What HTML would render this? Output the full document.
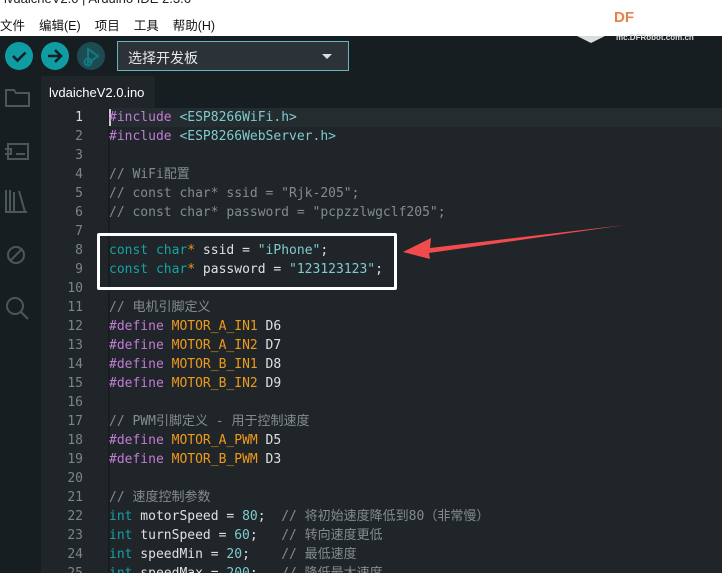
<!DOCTYPE html>
<html><head><meta charset="utf-8"><style>
*{margin:0;padding:0;box-sizing:border-box}
html,body{width:722px;height:573px;overflow:hidden}
body{background:#171e21;position:relative;font-family:"Liberation Sans","Noto Sans CJK SC",sans-serif}
.title{position:absolute;left:0;top:0;width:722px;height:36px;background:#fff}
.title .t{position:absolute;left:4px;top:-9px;font-size:13px;color:#222}
.menu{position:absolute;left:0;top:15px;font-size:12.5px;color:#111;white-space:nowrap}
.menu span{margin-right:14px}
.df{position:absolute;left:614px;top:9px;font-size:15px;font-weight:bold;color:#e8804a}
.mc{position:absolute;left:616px;top:33px;font-size:8px;font-weight:bold;color:#ddd}
.tri{position:absolute;left:577px;top:36px;width:0;height:0;border-left:14px solid transparent;border-right:14px solid transparent;border-top:7px solid #ddd}
.btn{position:absolute;top:42px;width:28px;height:28px;border-radius:50%;background:#0f9ca3}
.sel{position:absolute;left:117px;top:41px;width:232px;height:30px;border:1px solid #63b7bd;background:#2b3338;color:#e8e8e8;font-size:14px;padding:6px 0 0 10px}
.sel:after{content:"";position:absolute;right:16px;top:12px;border-left:5px solid transparent;border-right:5px solid transparent;border-top:5px solid #ddd}
.tab{position:absolute;left:41px;top:76px;width:114px;height:32px;background:#1f2528;color:#fff;font-size:13px;padding:9px 0 0 8px}
.ed{position:absolute;left:41px;top:108px;width:681px;height:465px;background:#1f2528}
.gut{position:absolute;left:108px;top:108px;width:2px;height:465px;background:#181e20}
.code{position:absolute;left:0;top:108px;width:722px;font-family:"DejaVu Sans Mono","Noto Sans CJK SC",monospace;font-size:13px;line-height:19px}
.l{height:19px;position:relative}
.n{position:absolute;left:40px;width:43px;text-align:right;color:#7c8589}
.c{position:absolute;left:109px;color:#e0e0e0;white-space:pre}
.cm{color:#858c90}.pp{color:#c37bd6}.ty{color:#17a1a8}.mac{color:#ef9a1c}.st{color:#7fcbd0}.nm{color:#7fcbd0}
.box{position:absolute;left:97px;top:233px;width:300px;height:57px;border:3px solid #fff;border-radius:2px}
</style></head><body>
<div class="title"><div class="t">lvdaicheV2.0 | Arduino IDE 2.3.6</div>
<div class="menu"><span>文件</span><span>编辑(E)</span><span>项目</span><span>工具</span><span>帮助(H)</span></div>
<div class="df">DF</div></div>
<div class="tri"></div><div class="mc">mc.DFRobot.com.cn</div>
<div class="btn" style="left:5px"><svg width="28" height="28"><path d="M8 14l4.5 4.5 8-8" stroke="#162024" stroke-width="2.6" fill="none"/></svg></div>
<div class="btn" style="left:41px"><svg width="28" height="28"><path d="M7 14h13M14 8l6 6-6 6" stroke="#162024" stroke-width="2.6" fill="none"/></svg></div>
<div class="btn" style="left:77px;background:#1c4c51"><svg width="28" height="28"><path d="M11 7l10 7-10 7z" stroke="#0f7a80" stroke-width="2" fill="none"/><circle cx="11" cy="20" r="3.5" stroke="#0f7a80" stroke-width="2" fill="none"/></svg></div>
<div class="sel">选择开发板</div>
<div class="tab">lvdaicheV2.0.ino</div>
<svg style="position:absolute;left:0;top:80px" width="40" height="260" fill="none" stroke="#4d5659" stroke-width="2">
<path d="M6 10h8l2 3h13v13H6z"/>
<path d="M8 64h20v15H8zM5 69h6v5H5M16 74h9"/>
<path d="M6 110v22M10 110v22M14 112v20M19 111l6 21M5 132h22"/>
<circle cx="16" cy="175" r="8"/><path d="M10 181l12-12"/>
<circle cx="15" cy="226" r="8"/><path d="M21 232l7 7"/>
</svg>
<div class="ed"></div><div class="gut"></div>
<div style="position:absolute;left:110px;top:108px;width:612px;height:19px;background:#242c30"></div>
<div style="position:absolute;left:109px;top:109px;width:2px;height:17px;background:#ccc"></div>
<div class="code"><div class="l"><span class="n" style="color:#ddd">1</span><span class="c"><span class="pp">#include</span> <span class="st">&lt;ESP8266WiFi.h&gt;</span></span></div><div class="l"><span class="n">2</span><span class="c"><span class="pp">#include</span> <span class="st">&lt;ESP8266WebServer.h&gt;</span></span></div><div class="l"><span class="n">3</span></div><div class="l"><span class="n">4</span><span class="c cm">// WiFi配置</span></div><div class="l"><span class="n">5</span><span class="c cm">// const char* ssid = "Rjk-205";</span></div><div class="l"><span class="n">6</span><span class="c cm">// const char* password = "pcpzzlwgclf205";</span></div><div class="l"><span class="n">7</span></div><div class="l"><span class="n">8</span><span class="c"><span class="ty">const char</span><span class="mac">*</span> ssid = <span class="st">"iPhone"</span>;</span></div><div class="l"><span class="n">9</span><span class="c"><span class="ty">const char</span><span class="mac">*</span> password = <span class="st">"123123123"</span>;</span></div><div class="l"><span class="n">10</span></div><div class="l"><span class="n">11</span><span class="c cm">// 电机引脚定义</span></div><div class="l"><span class="n">12</span><span class="c"><span class="pp">#define</span> <span class="mac">MOTOR_A_IN1</span> D6</span></div><div class="l"><span class="n">13</span><span class="c"><span class="pp">#define</span> <span class="mac">MOTOR_A_IN2</span> D7</span></div><div class="l"><span class="n">14</span><span class="c"><span class="pp">#define</span> <span class="mac">MOTOR_B_IN1</span> D8</span></div><div class="l"><span class="n">15</span><span class="c"><span class="pp">#define</span> <span class="mac">MOTOR_B_IN2</span> D9</span></div><div class="l"><span class="n">16</span></div><div class="l"><span class="n">17</span><span class="c cm">// PWM引脚定义 - 用于控制速度</span></div><div class="l"><span class="n">18</span><span class="c"><span class="pp">#define</span> <span class="mac">MOTOR_A_PWM</span> D5</span></div><div class="l"><span class="n">19</span><span class="c"><span class="pp">#define</span> <span class="mac">MOTOR_B_PWM</span> D3</span></div><div class="l"><span class="n">20</span></div><div class="l"><span class="n">21</span><span class="c cm">// 速度控制参数</span></div><div class="l"><span class="n">22</span><span class="c"><span class="ty">int</span> motorSpeed = <span class="nm">80</span>;  <span class="cm">// 将初始速度降低到80（非常慢）</span></span></div><div class="l"><span class="n">23</span><span class="c"><span class="ty">int</span> turnSpeed = <span class="nm">60</span>;   <span class="cm">// 转向速度更低</span></span></div><div class="l"><span class="n">24</span><span class="c"><span class="ty">int</span> speedMin = <span class="nm">20</span>;    <span class="cm">// 最低速度</span></span></div><div class="l"><span class="n">25</span><span class="c"><span class="ty">int</span> speedMax = <span class="nm">200</span>;   <span class="cm">// 降低最大速度</span></span></div></div>
<div class="box"></div>
<svg style="position:absolute;left:0;top:0" width="722" height="573"><path d="M625 225L430 248L431 238L403 252L430 259L429 253Z" fill="#f24b4e"/></svg>
</body></html>
